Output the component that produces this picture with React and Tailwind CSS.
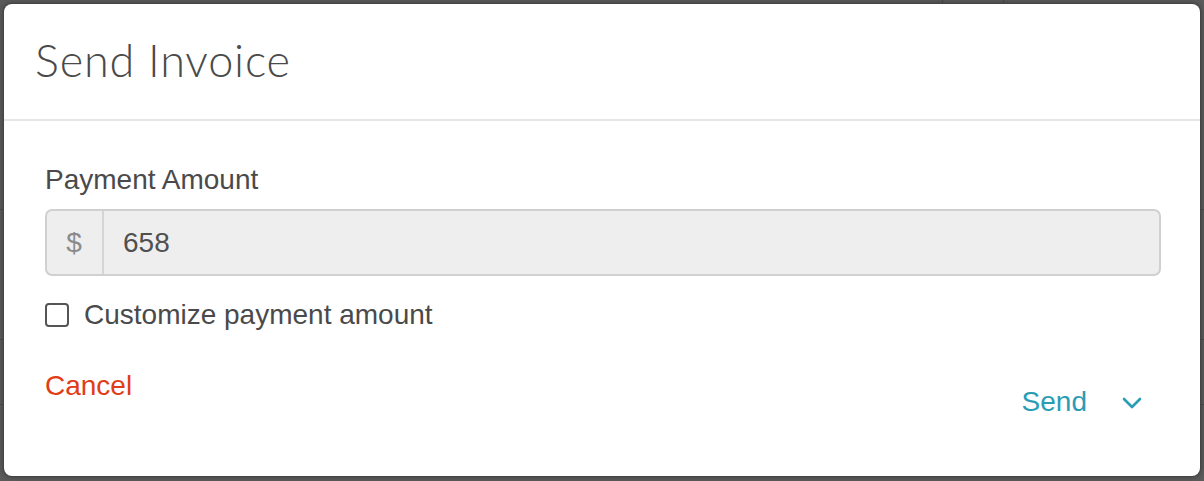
import { useState } from "react";

// Chevron for the send dropdown
const ChevronDown = (props) => (
  <svg viewBox="0 0 20 12" fill="none" stroke="currentColor" strokeWidth={2.6} strokeLinecap="round" strokeLinejoin="round" {...props}>
    <path d="M2 2l8 8 8-8" />
  </svg>
);

export default function App() {
  const [custom, setCustom] = useState(false);

  return (
    <div className="relative w-full h-[481px] overflow-hidden bg-[#5b5b5b]" style={{ fontFamily: '"Liberation Sans", Arial, sans-serif' }}>
      {/* page behind the overlay */}
      <div className="flex flex-col h-full">
        <div className="h-[4px] flex justify-end pr-[200px] gap-[60px]">
          <div className="w-px h-full bg-[#4a4a4a]" />
          <div className="w-px h-full bg-[#4a4a4a]" />
        </div>
        <div className="h-[206px] border-b border-[#4c4c4c]" />
        <div className="h-[130px] border-b border-[#4c4c4c]" />
        <div className="h-[65px] border-b border-[#4c4c4c]" />
      </div>

      {/* modal */}
      <div className="absolute left-[4px] top-[4px] right-[4px] bottom-[5px] flex flex-col bg-white rounded-[8px] shadow-[0_0_0_1px_#454545,0_0_6px_rgba(0,0,0,0.45)]">
        <div className="h-[117px] flex items-center px-[31px] border-b-2 border-[#e6e6e6]">
          <h2 className="text-[45px] font-light leading-none text-[#4a4a4a] tracking-[0.8px] pb-[2px]" style={{ fontFamily: 'Lato, "Open Sans", sans-serif' }}>
            Send Invoice
          </h2>
        </div>

        <div className="flex flex-col pl-[41px] pr-[39px] pt-[43px] text-[28px] leading-[32px] text-[#4a4a4a]">
          <label className="mb-[13px]">Payment Amount</label>

          <div className="flex h-[67px] rounded-[7px] border-2 border-[#d0d0d0] bg-[#eeeeee]">
            <div className="w-[57px] flex items-center justify-center border-r-2 border-[#d5d5d5] text-[#8a8a8a] pr-[1px]">$</div>
            <div className="flex items-center pl-[19px] text-[#505050]">658</div>
          </div>

          <label className="mt-[23px] flex items-center gap-[15px] cursor-pointer">
            <span
              onClick={() => setCustom(!custom)}
              className={`w-[24px] h-[24px] shrink-0 rounded-[4px] border-2 border-[#555] ${custom ? "bg-[#2b9fb5]" : "bg-white"}`}
            />
            <span>Customize payment amount</span>
          </label>

          <div className="mt-[39px] flex justify-between items-start">
            <button className="text-[#e03d17] leading-[32px]">Cancel</button>
            <button className="mt-[16px] mr-[19px] flex items-center gap-[35px] text-[#2a9db5] leading-[32px]">
              <span>Send</span>
              <ChevronDown className="w-[20px] h-[12px] mt-[2px]" />
            </button>
          </div>
        </div>
      </div>
    </div>
  );
}
